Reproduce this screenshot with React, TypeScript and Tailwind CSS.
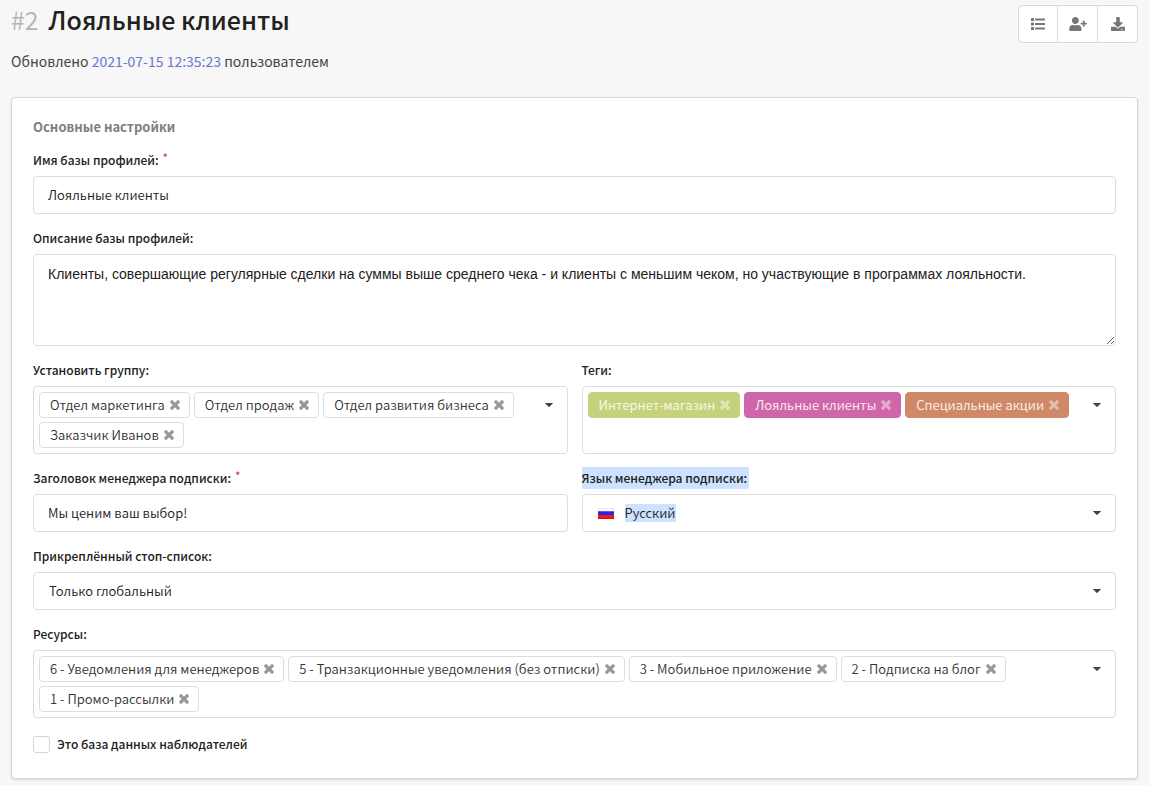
import { useState } from "react";
import type { ReactNode } from "react";
import { FaDownload, FaUserPlus } from "react-icons/fa";

const groupOptions = [
  "Отдел маркетинга",
  "Отдел продаж",
  "Отдел развития бизнеса",
  "Заказчик Иванов",
];

const resourceOptions = [
  "6 - Уведомления для менеджеров",
  "5 - Транзакционные уведомления (без отписки)",
  "3 - Мобильное приложение",
  "2 - Подписка на блог",
  "1 - Промо-рассылки",
];

const tagColors: Record<string, string> = {
  "Интернет-магазин": "bg-[#c6d17c] border-[#c6d17c] text-white/90",
  "Лояльные клиенты": "bg-[#cf66a9] border-[#cf66a9] text-white/90",
  "Специальные акции": "bg-[#cf8967] border-[#cf8967] text-white/90",
};

function Caret() {
  return (
    <svg viewBox="0 0 8 4" className="w-2 h-1 shrink-0 fill-[#444]" aria-hidden="true">
      <path d="M.4 0h7.2q.6 0 .2.5L4.4 3.8q-.4.4-.8 0L.2.5Q-.2 0 .4 0z" />
    </svg>
  );
}

function Cross() {
  return (
    <svg viewBox="300 366 1192 1192" className="w-[10px] h-[10px] fill-current" aria-hidden="true">
      <path d="M1490 1322q0 40-28 68l-136 136q-28 28-68 28t-68-28l-294-294-294 294q-28 28-68 28t-68-28l-136-136q-28-28-28-68t28-68l294-294-294-294q-28-28-28-68t28-68l136-136q28-28 68-28t68 28l294 294 294-294q28-28 68-28t68 28l136 136q28 28 28 68t-28 68l-294 294 294 294q28 28 28 68z" />
    </svg>
  );
}

function ListIcon() {
  return (
    <svg viewBox="0 0 14 12" className="w-[14px] h-3 fill-current" aria-hidden="true">
      <rect x="0" y="0" width="3" height="3" rx=".6" />
      <rect x="4" y=".4" width="10" height="2.2" rx=".5" />
      <rect x="0" y="4.5" width="3" height="3" rx=".6" />
      <rect x="4" y="4.9" width="10" height="2.2" rx=".5" />
      <rect x="0" y="9" width="3" height="3" rx=".6" />
      <rect x="4" y="9.4" width="10" height="2.2" rx=".5" />
    </svg>
  );
}

function Flag() {
  return (
    <svg viewBox="0 0 16 11" className="w-4 h-[11px] shrink-0" aria-hidden="true">
      <path fill="#e8e8e8" d="M0 0h16v3H0z" />
      <path fill="#fafafa" d="M1 1h14v2H1z" />
      <path fill="#5c5cf6" d="M0 3h16v2H0z" />
      <path fill="#2626e8" d="M0 4h16v3H0z" />
      <path fill="#f01818" d="M0 7h16v4H0z" />
      <path fill="#d80c0c" d="M0 6h1v5H0zM15 6h1v5h-1zM0 10h16v1H0z" />
    </svg>
  );
}

function FieldLabel({
  htmlFor,
  required,
  selected,
  children,
}: {
  htmlFor: string;
  required?: boolean;
  selected?: boolean;
  children: ReactNode;
}) {
  return (
    <div className="flex h-4 mb-2 items-center">
      <label
        htmlFor={htmlFor}
        className={
          selected
            ? "bg-[#cce2ff] pr-[2px] text-xs leading-[22px] font-medium"
            : "text-xs leading-[22px] font-medium"
        }
      >
        {children}
      </label>
      {required && <span className="ml-1 mb-1 text-xs leading-4 text-[#db2828]">*</span>}
    </div>
  );
}

function MultiSelect({
  id,
  options,
  colors,
}: {
  id: string;
  options: string[];
  colors?: Record<string, string>;
}) {
  const [items, setItems] = useState(options);

  return (
    <div className="flex min-h-[68px] items-start rounded border border-[#dcddde] bg-white pt-[5px] pb-1 pl-[5px] pr-[14px]">
      <div className="flex flex-1 flex-wrap gap-1">
        {items.map((item) => (
          <span
            key={item}
            className={`flex items-center rounded border h-[26px] pl-[10px] pr-[9px] text-[13px] leading-5 whitespace-nowrap ${
              colors ? colors[item] : "border-[#dcddde] bg-white text-[#333]"
            }`}
          >
            {item}
            <button
              type="button"
              aria-label={`Удалить ${item}`}
              className="ml-[5px] opacity-50 hover:opacity-80"
              onClick={() => setItems(items.filter((i) => i !== item))}
            >
              <Cross />
            </button>
          </span>
        ))}
      </div>
      <button id={id} type="button" className="flex h-[26px] items-center">
        <Caret />
      </button>
    </div>
  );
}

export default function App() {
  const [title, setTitle] = useState("Мы ценим ваш выбор!");

  return (
    <main className="min-h-screen bg-[#f7f7f7] px-[11px] pt-[5px] pb-[6px] font-['Noto_Sans_CJK_SC',sans-serif] font-[350] text-[#212121]">
      <header className="flex items-start justify-between pr-[1px]">
        <div>
          <h1 className="text-[25px] leading-7 font-medium">
            <span className="mr-[10px] font-[350] text-[#b4b4b4]">#2</span>
            Лояльные клиенты
          </h1>
          <p className="mt-4 text-sm leading-6 font-normal text-[#444]">
            Обновлено{" "}
            <a href="#history" className="text-[#6a76d2]">
              2021-07-15 12:35:23
            </a>{" "}
            пользователем
          </p>
        </div>
        <div className="flex h-[38px] divide-x divide-[#d8d9da] rounded border border-[#d8d9da] bg-white text-[14px] text-[#767676]">
          <button type="button" aria-label="Список" className="flex w-[39px] items-center justify-center">
            <ListIcon />
          </button>
          <button type="button" aria-label="Добавить профиль" className="flex w-10 items-center justify-center">
            <FaUserPlus className="h-[14px] w-[18px]" />
          </button>
          <button type="button" aria-label="Скачать" className="flex w-[39px] items-center justify-center">
            <FaDownload />
          </button>
        </div>
      </header>

      <form className="mt-6 mr-[1px] rounded border border-[#d8d9da] bg-white px-[21px] pt-[19px] pb-6 shadow-[0_1px_2px_rgba(34,36,38,0.15)]">
        <h2 className="text-[13px] leading-5 font-bold text-[#7f7f7f]">Основные настройки</h2>

        <div className="mt-[15px]">
          <FieldLabel htmlFor="name" required>
            Имя базы профилей:
          </FieldLabel>
          <input
            id="name"
            type="text"
            defaultValue="Лояльные клиенты"
            className="block h-[38px] w-full rounded border border-[#dcddde] px-[14px] pb-[2px] text-[13px]"
          />
        </div>

        <div className="mt-4">
          <FieldLabel htmlFor="description">Описание базы профилей:</FieldLabel>
          <textarea
            id="description"
            defaultValue="Клиенты, совершающие регулярные сделки на суммы выше среднего чека - и клиенты с меньшим чеком, но участвующие в программах лояльности."
            className="block h-[92px] w-full resize-y rounded border border-[#dcddde] px-[14px] py-[10px] font-['Liberation_Sans',sans-serif] text-sm leading-[18px]"
          />
        </div>

        <div className="mt-4 grid grid-cols-2 gap-x-[14px] gap-y-4">
          <div>
            <FieldLabel htmlFor="groups">Установить группу:</FieldLabel>
            <MultiSelect id="groups" options={groupOptions} />
          </div>
          <div>
            <FieldLabel htmlFor="tags">Теги:</FieldLabel>
            <MultiSelect id="tags" options={Object.keys(tagColors)} colors={tagColors} />
          </div>
          <div>
            <FieldLabel htmlFor="title" required>
              Заголовок менеджера подписки:
            </FieldLabel>
            <input
              id="title"
              type="text"
              value={title}
              onChange={(e) => setTitle(e.target.value)}
              className="block h-[38px] w-full rounded border border-[#dcddde] px-[14px] pb-[2px] text-[13px]"
            />
          </div>
          <div>
            <FieldLabel htmlFor="language" selected>
              Язык менеджера подписки:
            </FieldLabel>
            <div className="flex h-[38px] items-center rounded border border-[#dcddde] pl-[15px] pr-[14px]">
              <Flag />
              <select
                id="language"
                className="ml-[11px] h-[18px] appearance-none field-sizing-content bg-[#cce2ff] text-[13px] leading-[18px]"
              >
                <option>Русский</option>
                <option>English</option>
              </select>
              <div className="flex-1" />
              <Caret />
            </div>
          </div>
        </div>

        <div className="mt-4">
          <FieldLabel htmlFor="stoplist">Прикреплённый стоп-список:</FieldLabel>
          <div className="grid items-center">
            <select
              id="stoplist"
              className="col-start-1 row-start-1 h-[38px] w-full appearance-none rounded border border-[#dcddde] bg-white px-[15px] text-[13px]"
            >
              <option>Только глобальный</option>
              <option>Не использовать</option>
            </select>
            <div className="pointer-events-none col-start-1 row-start-1 justify-self-end pr-[15px]">
              <Caret />
            </div>
          </div>
        </div>

        <div className="mt-4">
          <FieldLabel htmlFor="resources">Ресурсы:</FieldLabel>
          <MultiSelect id="resources" options={resourceOptions} />
        </div>

        <div className="mt-4 flex items-center">
          <input
            id="observers"
            type="checkbox"
            className="size-[17px] appearance-none rounded-[3px] border border-[#d4d4d5] bg-white checked:bg-[#6a76d2]"
          />
          <label htmlFor="observers" className="ml-[7px] text-xs leading-5 font-medium">
            Это база данных наблюдателей
          </label>
        </div>
      </form>
    </main>
  );
}
